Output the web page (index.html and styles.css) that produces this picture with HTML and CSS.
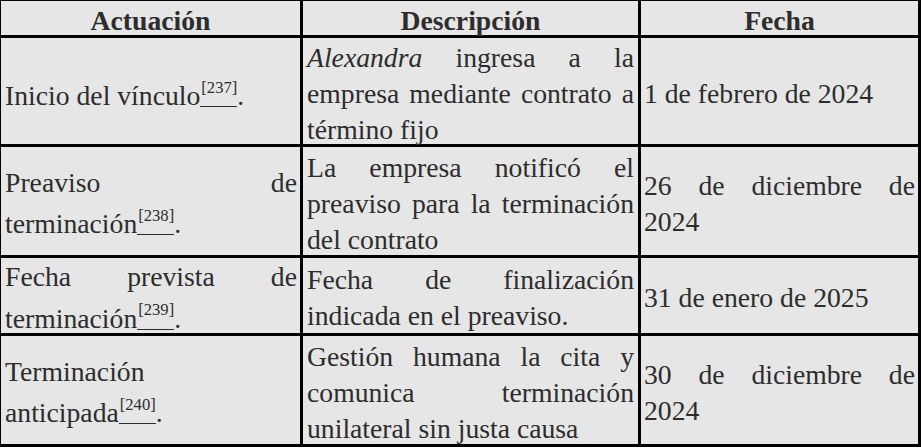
FILE: index.html
```html
<!DOCTYPE html>
<html lang="es">
<head>
<meta charset="utf-8">
<title>Actuaciones</title>
<link rel="stylesheet" href="styles.css">
</head>
<body>
<div class="table" role="table">
  <div class="cell head c1" role="columnheader"><p class="t">Actuación</p></div>
  <div class="cell head c2" role="columnheader"><p class="t">Descripción</p></div>
  <div class="cell head c3" role="columnheader"><p class="t">Fecha</p></div>

  <div class="cell c1" role="cell"><p class="t"><span class="nw">Inicio del vínculo<a class="fn">[237]</a>.</span></p></div>
  <div class="cell c2" role="cell"><p class="t"><em>Alexandra</em> ingresa a la empresa mediante contrato a término fijo</p></div>
  <div class="cell c3" role="cell"><p class="t">1 de febrero de 2024</p></div>

  <div class="cell c1" role="cell"><p class="t">Preaviso de <span class="nw">terminación<a class="fn">[238]</a>.</span></p></div>
  <div class="cell c2" role="cell"><p class="t">La empresa notificó el preaviso para la terminación del contrato</p></div>
  <div class="cell c3" role="cell"><p class="t">26 de diciembre de 2024</p></div>

  <div class="cell c1" role="cell"><p class="t">Fecha prevista de <span class="nw">terminación<a class="fn">[239]</a>.</span></p></div>
  <div class="cell c2" role="cell"><p class="t">Fecha de finalización indicada en el preaviso.</p></div>
  <div class="cell c3" role="cell"><p class="t">31 de enero de 2025</p></div>

  <div class="cell c1" role="cell"><p class="t">Terminación <span class="nw">anticipada<a class="fn">[240]</a>.</span></p></div>
  <div class="cell c2" role="cell"><p class="t">Gestión humana la cita y comunica terminación unilateral sin justa causa</p></div>
  <div class="cell c3" role="cell"><p class="t">30 de diciembre de 2024</p></div>
</div>
</body>
</html>
```
FILE: styles.css
```css
html, body {
  margin: 0;
  padding: 0;
  background: #ffffff;
}

body {
  font-family: "Liberation Serif", "Times New Roman", serif;
  font-size: 27.7px;
  line-height: 36px;
  color: #2d2d2d;
  overflow: hidden;
}

.table {
  display: grid;
  grid-template-columns: 299px 335px 277px;
  grid-template-rows: 34px 106px 108px 75px 108px;
  gap: 3px;
  padding: 3px;
  background: #000000;
  width: max-content;
  margin: -2px 0 0 -2px;
}

.cell {
  background: #e6e6e6;
  display: flex;
  flex-direction: column;
  justify-content: center;
  padding: 5px 4px 0 4px;
  text-align: justify;
  min-width: 0;
}

.t {
  margin: 0;
}

.c1 {
  padding-left: 4px;
  padding-right: 3px;
}

.c3 {
  padding-left: 3px;
  padding-right: 3px;
}

.head {
  justify-content: flex-start;
  padding: 2px 0 0 0;
  text-align: center;
  font-weight: bold;
}

.nw {
  white-space: nowrap;
}

.fn {
  display: inline-block;
  overflow: hidden;
  font-size: 16.6px;
  line-height: 16.6px;
  padding: 7px 0 10.3px 1px;
  border-bottom: 1px solid currentColor;
  vertical-align: -2px;
  color: inherit;
  text-decoration: none;
}

em {
  font-style: italic;
}
```
